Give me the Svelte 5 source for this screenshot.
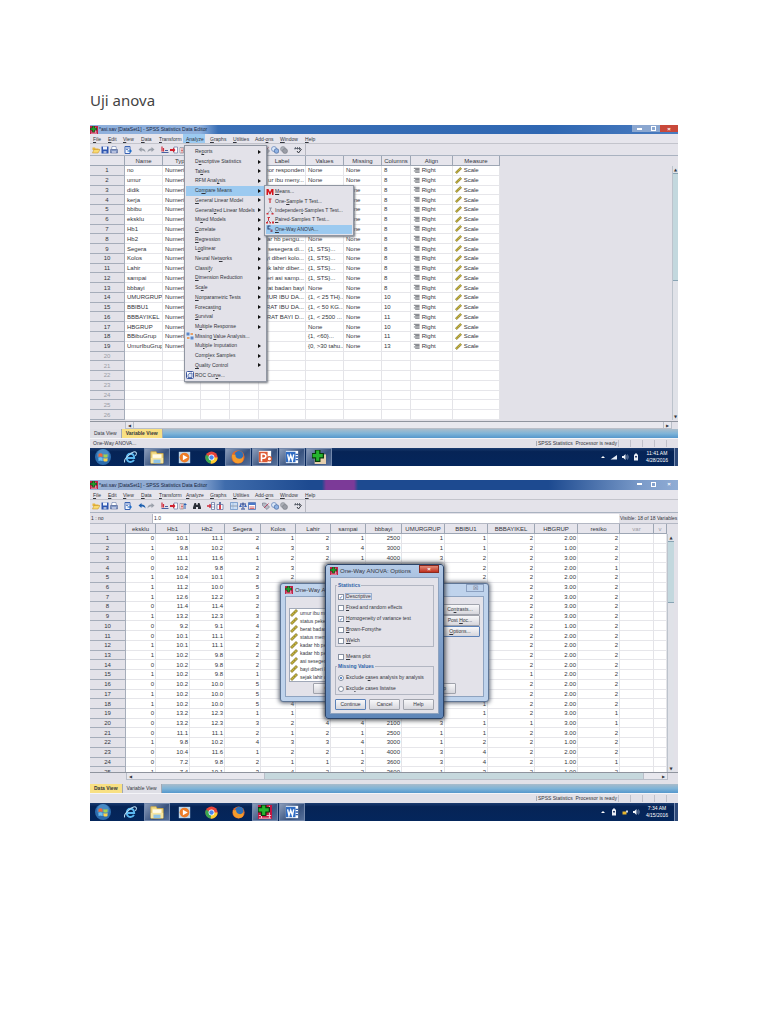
<script>
  const menus = ['&File', '&Edit', '&View', '&Data', '&Transform', '&Analyze', '&Graphs', '&Utilities', 'Add-&ons', '&Window', '&Help'];

  const toolsVariable = ['open', 'save', 'print', 'gap', 'recall', 'gap', 'undoOff', 'redo', 'gap', 'gocase', 'govar', 'vars', 'gap', 'find', 'gap', 'insCase', 'insVar', 'gap', 'split', 'weight', 'select', 'gap', 'labels', 'sets', 'showAll', 'gap', 'spell'];
  const toolsData = toolsVariable.map((t) => (t === 'undoOff' ? 'undo' : t));

  const analyze = [
    ['Re&ports', true], ['D&escriptive Statistics', true], ['Ta&bles', true], ['RFM Anal&ysis', true],
    ['Co&mpare Means', true], ['&General Linear Model', true], ['Generali&zed Linear Models', true],
    ['Mi&xed Models', true], ['&Correlate', true], ['&Regression', true], ['L&oglinear', true],
    ['Neural Net&works', true], ['Classi&fy', true], ['&Dimension Reduction', true], ['Sc&ale', true],
    ['&Nonparametric Tests', true], ['Forecas&ting', true], ['&Survival', true], ['M&ultiple Response', true],
    ['Missing &Value Analysis...', false, 'mva'], ['Mul&tiple Imputation', true], ['Comp&lex Samples', true],
    ['&Quality Control', true], ['ROC Cur&ve...', false, 'roc']
  ];
  const compare = [
    ['&Means...', 'means'], ['One-&Sample T Test...', 'tone'], ['Independen&t-Samples T Test...', 'ttwo'],
    ['&Paired-Samples T Test...', 'tpair'], ['&One-Way ANOVA...', 'anova']
  ];

  const varHead = ['', 'Name', 'Type', '', '', 'Label', 'Values', 'Missing', 'Columns', 'Align', 'Measure'];
  const vars = [
    ['no', 'mor responden', 'None', 8], ['umur', 'ur ibu meny...', 'None', 8],
    ['didik', '', '', 8], ['kerja', '', '', 8],
    ['bbibu', '', '', 8], ['eksklu', '', '', 8],
    ['Hb1', '', '', 8], ['Hb2', 'dar hb pengu...', 'None', 8],
    ['Segera', 'i sesegera di...', '{1, STS}...', 8], ['Kolos', 'yi diberi kolo...', '{1, STS}...', 8],
    ['Lahir', 'jak lahir diber...', '{1, STS}...', 8], ['sampai', 'eri asi samp...', '{1, STS}...', 8],
    ['bbbayi', 'rat badan bayi', 'None', 8], ['UMURGRUP', 'MUR IBU DA...', '{1, < 25 TH}...', 10],
    ['BBIBU1', 'ERAT IBU DA...', '{1, < 50 KG...', 10], ['BBBAYIKEL', 'ERAT BAYI D...', '{1, < 2500 ...', 11],
    ['HBGRUP', '', 'None', 10], ['BBibuGrup', '', '{1, <60}...', 11], ['UmurIbuGrup', '', '{0, >30 tahu...', 13]
  ];
  const variableRows = Array.from({ length: 26 }, (_, i) => vars[i]);

  const dataHead = ['', 'eksklu', 'Hb1', 'Hb2', 'Segera', 'Kolos', 'Lahir', 'sampai', 'bbbayi', 'UMURGRUP', 'BBIBU1', 'BBBAYIKEL', 'HBGRUP', 'resiko', 'var', 'v'];
  const dataRows = `0 10.1 11.1 2 1 2 1 2500 1 1 2 2.00 2
1 9.8 10.2 4 3 3 4 3000 1 1 2 1.00 2
0 11.1 11.6 1 2 2 1 4000 3 2 2 3.00 2
0 10.2 9.8 2 3 - - - - 2 2 2.00 1
1 10.4 10.1 3 2 - - - - 2 2 2.00 2
1 11.2 10.0 5 - - - - - - 2 3.00 2
1 12.6 12.2 3 - - - - - - 2 3.00 2
0 11.4 11.4 2 - - - - - - 2 3.00 2
1 13.2 12.3 3 - - - - - - 2 3.00 2
0 9.2 9.1 4 - - - - - - 2 1.00 2
0 10.1 11.1 2 - - - - - - 2 2.00 2
1 10.1 11.1 2 - - - - - - 2 2.00 2
1 10.2 9.8 2 - - - - - - 2 2.00 2
0 10.2 9.8 2 - - - - - - 2 2.00 2
1 10.2 9.8 1 - - - - - - 1 2.00 2
0 10.2 10.0 5 - - - - - - 2 2.00 2
1 10.2 10.0 5 - - - - - - 2 2.00 2
1 10.2 10.0 5 4 - - - - 1 2 2.00 2
0 13.2 12.3 1 1 - - - - 1 2 3.00 1
0 13.2 12.3 3 2 4 4 2100 3 1 1 3.00 1
0 11.1 11.1 2 1 2 1 2500 1 1 2 3.00 2
1 9.8 10.2 4 3 3 4 3000 1 2 2 1.00 2
0 10.4 11.6 1 2 2 1 4000 3 4 2 2.00 2
0 7.2 9.8 2 1 1 2 3600 3 4 2 1.00 1
1 7.4 10.1 3 4 2 2 3600 1 3 2 1.00 2`.split('\n').map((r) => r.split(' ').map((c) => (c === '-' ? '' : c)));

  const factors = ['umur ibu me', 'status peker', 'berat badan', 'status meny', 'kadar hb pe', 'kadar hb pe', 'asi sesegera', 'bayi diberi k', 'sejak lahir di'];
  const stats = [
    ['&Descriptive', true], ['&Fixed and random effects', false], ['&Homogeneity of variance test', true],
    ['&Brown-Forsythe', false], ['&Welch', false]
  ];

  function parts(s) {
    const i = s.indexOf('&');
    return i < 0 ? [s, '', ''] : [s.slice(0, i), s[i + 1], s.slice(i + 2)];
  }
</script>

{#snippet key(s)}{@const p = parts(s)}<span>{p[0]}<u>{p[1]}</u>{p[2]}</span>{/snippet}

{#snippet icon(n)}
  <svg class="ic" viewBox="0 0 16 16" aria-hidden="true">
    {#if n === 'app'}
      <rect width="16" height="16" fill="#c22048" /><path d="M2 12h12M11 2v12M2 15h12" stroke="#f4d0da" stroke-width="1" /><path d="M5 0h4v4h4v4H9v4H5V8H1V4h4z" fill="#1fa02c" stroke="#0b3d10" />
    {:else if n === 'open'}
      <path d="M1 3h5l1 2h6v3H1z" fill="#e8b53c" /><path d="M1 14 4 7h12l-4 7z" fill="#f8da72" stroke="#c58a1e" />
    {:else if n === 'save'}
      <path d="M1 1h14v14H1z" fill="#2d55b0" /><path d="M4 1h8v6H4z" fill="#eef2fb" /><path d="M5 10h6v5H5z" fill="#a8b9de" />
    {:else if n === 'print'}
      <path d="M4 1h8l1 6H3z" fill="#fff" stroke="#5068a0" /><path d="M1 7h14v7H1z" fill="#8297c4" stroke="#41568c" /><path d="M4 11h8v2H4z" fill="#eef" />
    {:else if n === 'recall'}
      <path d="M2 1h10v14H2z" fill="#f5f8ff" stroke="#3a64b4" stroke-width="2" /><path d="M4 4h6M4 7h4" stroke="#3a64b4" stroke-width="1.5" /><path d="M7 9h5V6l4 4-4 4v-3H7z" fill="#1e6cc8" />
    {:else if n === 'undo' || n === 'undoOff'}
      <path d="M1 7l6-5v3c5 0 8 3 8 8-2-3-4-4-8-4v3z" fill={n === 'undo' ? '#1c5fae' : '#9aa0aa'} />
    {:else if n === 'redo'}
      <path d="M15 7 9 2v3C4 5 1 8 1 13c2-3 4-4 8-4v3z" fill="#9aa0aa" />
    {:else if n === 'gocase'}
      <path d="M2 1v10M5 4v7" stroke="#d03040" stroke-width="2.4" /><path d="M1 13h14M8 9h6" stroke="#4a62a0" stroke-width="2.4" />
    {:else if n === 'govar'}
      <path d="M8 2h7v12H8z" fill="#fff" stroke="#6b7aa5" stroke-width="1.4" /><path d="M0 6h6V3l5 5-5 5v-3H0z" fill="#d2202e" />
    {:else if n === 'vars'}
      <path d="M2 3h7v11H2z" fill="#fff" stroke="#667" /><path d="M4 6h4M4 9h4M4 12h4" stroke="#c33" stroke-width="1.4" /><path d="M12 2v12M10 5h5" stroke="#2b61b5" stroke-width="2" />
    {:else if n === 'find'}
      <path d="M3 2h3l1 4h2l1-4h3l3 9v3H10v-4H6v4H0v-3z" fill="#2c3038" />
    {:else if n === 'insCase'}
      <path d="M9 1h6v14H9z" fill="#fff" stroke="#55699c" stroke-width="1.4" /><path d="M9 5h6M9 10h6" stroke="#55699c" /><path d="M0 8h8M6 4v8" stroke="#cf2f3c" stroke-width="2.6" />
    {:else if n === 'insVar'}
      <path d="M2 5h12v10H2z" fill="#fff" stroke="#55699c" stroke-width="1.4" /><path d="M6 5h4v10H6z" fill="#d64450" /><path d="M8 0v5" stroke="#33518f" stroke-width="3" />
    {:else if n === 'split'}
      <path d="M1 1h14v14H1z" fill="#e8f1fc" stroke="#5a86c0" stroke-width="1.4" /><path d="M1 8h14" stroke="#7a8aa0" stroke-width="2" /><path d="M1 4h14M1 12h14M6 1v14" stroke="#7aa5d8" />
    {:else if n === 'weight'}
      <path d="M8 1v12M2 4h12M4 14h8" stroke="#26438e" stroke-width="2" /><path d="M0 10 3 4l3 6zM10 10l3-6 3 6z" fill="#3c65bb" />
    {:else if n === 'select'}
      <path d="M1 1h14v14H1z" fill="#fff" stroke="#4b6cb0" stroke-width="1.6" /><path d="M1 2h14v4H1z" fill="#4b78c8" /><path d="M3 10h10M3 13h10" stroke="#c84850" stroke-width="1.6" />
    {:else if n === 'labels'}
      <path d="M1 2h6l8 8-5 5-9-8z" fill="#b7bac4" stroke="#596074" /><path d="M4 12l9-9" stroke="#b83a58" stroke-width="1.8" />
    {:else if n === 'sets'}
      <circle cx="6" cy="6" r="5" fill="#dbe8f8" stroke="#5f7fb8" stroke-width="1.4" /><circle cx="11" cy="10" r="4.6" fill="#8fb2e4" stroke="#47689f" stroke-width="1.4" />
    {:else if n === 'showAll'}
      <circle cx="6" cy="6" r="5" fill="#adb0b8" stroke="#80848f" /><circle cx="10" cy="10" r="5" fill="#9a9da6" stroke="#73767f" />
    {:else if n === 'spell'}
      <path d="M1 5h13M3 2l-1 5M7 2v5M11 2v6" stroke="#555b66" stroke-width="1.7" fill="none" /><path d="M6 10l3 4 6-8" stroke="#33373f" stroke-width="2" fill="none" />
    {:else if n === 'ruler'}
      <path d="M1 12 12 1l3 3L4 15z" fill="#c9b53a" stroke="#6f6418" stroke-width="1.4" /><path d="M5 9l2 2M8 6l2 2" stroke="#6f6418" />
    {:else if n === 'align'}
      <path d="M2 3h13M5 6h10M2 9h13M5 12h10" stroke="#50545c" stroke-width="1.8" />
    {:else if n === 'mva'}
      <rect width="16" height="16" fill="#dfe8f6" /><path d="M1 1h6v6H1zM9 9h6v6H9z" fill="#5d86c6" /><path d="M9 2h5v4H9zM2 10h5v4H2z" fill="#e8a068" />
    {:else if n === 'roc'}
      <rect x="1" y="1" width="14" height="14" rx="2" fill="#fff" stroke="#3b579e" stroke-width="2" /><path d="M4 13V8q0-4 8-4v9z" fill="#d9e2f4" stroke="#3b579e" stroke-width="1.5" />
    {:else if n === 'means'}
      <path d="M1 14V2h4l3 6 3-6h4v12h-3V7l-3 6H7L4 7v7z" fill="#d3141c" />
    {:else if n === 'tone'}
      <path d="M5 4h6M8 4v8" stroke="#cf3038" stroke-width="2.4" />
    {:else if n === 'ttwo'}
      <path d="M6 2h6M9 2v5M8 7l-5 6M9 7l5 6" stroke="#7e8290" stroke-width="1.5" /><path d="M1 12h4v3H1zM11 12h4v3h-4z" fill="#cf3038" />
    {:else if n === 'tpair'}
      <path d="M5 2v7M3 3h5" stroke="#cf3038" stroke-width="2" /><path d="M1 13l4-4 4 4" stroke="#80485a" fill="none" stroke-width="1.6" /><path d="M0 12h4v3H0zM7 12h3v3H7zM12 11h4v4h-4z" fill="#cf3038" />
    {:else if n === 'anova'}
      <path d="M3 2h6M4 2v6h5" stroke="#2d4270" stroke-width="2.2" fill="none" /><path d="M9 9h4v5H9z" fill="#8a5870" />
    {:else if n === 'start'}
      <circle cx="8" cy="8" r="8" fill="#2c6cae" /><circle cx="8" cy="6" r="6" fill="#5b9fd2" opacity=".6" /><path d="M3.500 5q2-1.500 4 0v3q-2-1-4 0z" fill="#f0683a" /><path d="M8.500 5q2 1.200 4 0v3q-2 1.200-4 0z" fill="#a6d14c" /><path d="M3.500 9q2-1.300 4 0v3q-2-1-4 0z" fill="#6cc0f2" /><path d="M8.500 9q2 1.200 4 0v3q-2 1.200-4 0z" fill="#fbd24a" />
    {:else if n === 'ie'}
      <path d="M3.500 8.500h9q0-5-4.500-5t-4.500 5 4.500 5q3 0 4.200-2.600" fill="none" stroke="#5bb8f0" stroke-width="2.400" /><path d="M1 14Q-1 11 6 5t9-3q1 1-1 4" fill="none" stroke="#b9dcf2" stroke-width="1.300" />
    {:else if n === 'folder'}
      <path d="M1 2h6l1 2h7v11H1z" fill="#f3dc86" stroke="#c9a84a" /><path d="M3 5h10v6H3z" fill="#fffbe8" /><path d="M1 9h14v6H1z" fill="#f7e6a2" /><path d="M4 11h8v4H4z" fill="#8fc4e6" />
    {:else if n === 'wmp'}
      <rect x="1" y="1" width="14" height="14" fill="#bcd6ec" /><circle cx="8" cy="8" r="6" fill="#ee7d28" /><path d="M6 4.500v7L12 8z" fill="#fff" />
    {:else if n === 'chrome'}
      <circle cx="8" cy="8" r="7.500" fill="#e6453a" /><path d="M8 8 1.300 4.500A7.500 7.500 0 0 0 7 15.500z" fill="#39a852" /><path d="M8 8h7.500A7.500 7.500 0 0 1 7 15.500z" fill="#fbce30" /><circle cx="8" cy="8" r="3.600" fill="#fff" /><circle cx="8" cy="8" r="2.700" fill="#4886ee" />
    {:else if n === 'firefox'}
      <circle cx="8" cy="8" r="7.500" fill="#e2692a" /><circle cx="9" cy="6" r="5" fill="#2f6fb6" /><path d="M1 5q2 1 4 0 0 5 5 5 3 0 4-3 1 8-6 8T1 5z" fill="#f59c2c" />
    {:else if n === 'ppt'}
      <path d="M1 1h14v14H1z" fill="#fff" /><circle cx="13" cy="10" r="2.500" fill="none" stroke="#d2562e" stroke-width="1.400" /><path d="M1 2h10v12H1z" fill="#dc5a34" /><path d="M4 13V4.500h2.500q2.500 .3 2.500 2.400T6.500 9.500H4" fill="none" stroke="#fff" stroke-width="1.800" />
    {:else if n === 'word'}
      <path d="M1 1h14v14H1z" fill="#fff" /><path d="M12 5h3M12 8h3M12 11h3" stroke="#2f5fae" stroke-width="1.500" /><path d="M1 2h11v12H1z" fill="#2f6cc4" /><path d="M3 5l1.500 7L6.500 6l2 6L10 5" fill="none" stroke="#fff" stroke-width="1.600" />
    {:else if n === 'spss'}
      <path d="M3 5h13v11H3z" fill="#e6cfae" /><path d="M4 0h5v4h4v5H9v4H4V9H0V4h4z" fill="#25b52e" stroke="#083c0c" stroke-width="1.400" />
    {:else if n === 'spssRed'}
      <path d="M0 0h16v16H0z" fill="#c41440" /><path d="M1 12h14M4 1v14M13 1v14M1 15h14" stroke="#f7d8e0" /><path d="M4 0h5v3h4v5H9v4H4V8H0V3h4z" fill="#25b52e" stroke="#083c0c" stroke-width="1.400" />
    {:else if n === 'caret'}
      <path d="M4 10l4-4 4 4z" fill="#fff" />
    {:else if n === 'signal'}
      <path d="M1 13l13-9v9z" fill="#e6ecf6" />
    {:else if n === 'speaker'}
      <path d="M2 6h3l4-4v12l-4-4H2z" fill="#f2f5fa" /><path d="M11 5q2 3 0 6M13 3q3 5 0 10" stroke="#cdd7e8" fill="none" />
    {:else if n === 'battery'}
      <path d="M6 1h4v2h2v12H4V3h2z" fill="#e9edf5" /><path d="M6 6h4v3H6z" fill="#34466e" />
    {:else if n === 'net'}
      <path d="M3 7h8v6H3z" fill="#e6b52c" /><path d="M10 5h4v4h-4z" fill="#cfd6e2" />
    {/if}
  </svg>
{/snippet}

{#snippet chrome(tools, active)}
  <header class="title">
    {@render icon('app')}<span>*asi.sav [DataSet1] - SPSS Statistics Data Editor</span>
    <div class="sys">
      <button aria-label="Minimize"><i class="min"></i></button>
      <button aria-label="Restore"><i class="max"></i></button>
      <button aria-label="Close" class="close">×</button>
    </div>
  </header>
  <nav class="menubar">
    {#each menus as m}<button class:on={m === active}>{@render key(m)}</button>{/each}
  </nav>
  <div class="toolbar">
    {#each tools as t}
      {#if t === 'gap'}<i class="gap"></i>{:else}<button aria-label={t}>{@render icon(t)}</button>{/if}
    {/each}
    <i class="end"></i>
  </div>
{/snippet}

{#snippet foot(view, status, apps, openApps, tray, time, date)}
  <div class="tabs">
    {#each ['Data View', 'Variable View'] as t}<button class:sel={t === view}>{t}</button>{/each}
  </div>
  <div class="status">
    <span class="msg">{status}</span><span class="proc">SPSS Statistics &nbsp;Processor is ready</span>
    <i></i><i></i><i></i><i></i><i></i>
  </div>
  <footer class="taskbar">
    {#each apps as a}<button aria-label={a} class:open={openApps.includes(a)}>{@render icon(a)}</button>{/each}
    <div class="tray">
      {#each tray as t}{@render icon(t)}{/each}
      <time>{time}<br />{date}</time><i class="peek"></i>
    </div>
  </footer>
{/snippet}

<main>
  <h1>Uji anova</h1>

  <section class="screen one">
    {@render chrome(toolsVariable, '&Analyze')}
    <div class="sheet">
      <table class="vars">
        <thead><tr>{#each varHead as h}<th>{h}</th>{/each}</tr></thead>
        <tbody>
          {#each variableRows as r, i}
            <tr>
              <th class:dim={!r}>{i + 1}</th>
              {#if r}
                <td>{r[0]}</td><td>Numeri</td><td></td><td></td><td>{r[1]}</td><td>{r[2]}</td><td>None</td><td>{r[3]}</td>
                <td>{@render icon('align')} Right</td><td>{@render icon('ruler')} Scale</td>
              {:else}
                {#each Array(10) as _}<td></td>{/each}
              {/if}
            </tr>
          {/each}
        </tbody>
      </table>
      <div class="vscroll"><b>▲</b><i></i><b>▼</b></div>
    </div>
    <div class="hscroll"><b>◀</b><i></i><b>▶</b></div>
    {@render foot('Variable View', 'One-Way ANOVA...', ['start', 'ie', 'folder', 'wmp', 'chrome', 'firefox', 'ppt', 'word', 'spss'], ['folder', 'firefox', 'ppt', 'word', 'spss'], ['caret', 'signal', 'speaker', 'battery'], '11:41 AM', '4/28/2016')}

    <div class="popup analyze">
      {#each analyze as [label, sub, ic]}
        <button class:on={label === 'Co&mpare Means'}>
          <em>{#if ic}{@render icon(ic)}{/if}</em>{@render key(label)}{#if sub}<s></s>{/if}
        </button>
      {/each}
    </div>
    <div class="popup compare">
      {#each compare as [label, ic], i}
        <button class:on={i === 4}><em>{@render icon(ic)}</em>{@render key(label)}</button>
      {/each}
    </div>
  </section>

  <section class="screen two">
    {@render chrome(toolsData, '')}
    <div class="cellbar"><span>1 : no</span><input aria-label="Cell value" value="1.0" /><span>Visible: 18 of 18 Variables</span></div>
    <div class="sheet">
      <table class="data">
        <thead><tr>{#each dataHead as h, i}<th class:dim={i > 13}>{h}</th>{/each}</tr></thead>
        <tbody>
          {#each dataRows as r, i}
            <tr><th>{i + 1}</th>{#each r as c}<td>{c}</td>{/each}<td></td><td></td></tr>
          {/each}
        </tbody>
      </table>
      <div class="vscroll"><b>▲</b><i></i><b>▼</b></div>
    </div>
    <div class="hscroll"><b>◀</b><i></i><b>▶</b></div>
    {@render foot('Data View', '', ['start', 'ie', 'folder', 'wmp', 'chrome', 'firefox', 'spssRed', 'word'], ['folder', 'spssRed', 'word'], ['caret', 'battery', 'net', 'speaker'], '7:34 AM', '4/15/2016')}

    <div class="dialog anova">
      <header>{@render icon('app')}<span>One-Way AN</span><button aria-label="Close ANOVA">☒</button></header>
      <div class="pane">
        <div class="cols">
          <ul>{#each factors as f}<li>{@render icon('ruler')}{f}</li>{/each}</ul>
          <div class="side">
            <button>{@render key('Co&ntrasts...')}</button><button>{@render key('Post &Hoc...')}</button><button class="focus">{@render key('&Options...')}</button>
          </div>
        </div>
        <div class="acts"><button>OK</button><button>Help</button></div>
      </div>
    </div>

    <div class="dialog options">
      <header>{@render icon('app')}<span>One-Way ANOVA: Options</span><button class="red" aria-label="Close options">×</button></header>
      <div class="pane">
        <fieldset>
          <legend>Statistics</legend>
          {#each stats as [l, c], i}<label class:focused={i === 0}><input type="checkbox" checked={c} />{@render key(l)}</label>{/each}
        </fieldset>
        <label class="plot"><input type="checkbox" />{@render key('&Means plot')}</label>
        <fieldset>
          <legend>Missing Values</legend>
          <label><input type="radio" name="missing" checked />{@render key('Exclude c&ases analysis by analysis')}</label>
          <label><input type="radio" name="missing" />{@render key('Exc&lude cases listwise')}</label>
        </fieldset>
        <div class="acts"><button class="focus">Continue</button><button>Cancel</button><button>Help</button></div>
      </div>
    </div>
  </section>
</main>

<style>
  :global(body) { margin: 0; background: #fff; }
  main { padding: 90px 90px 40px; font: 5px/1 "Liberation Sans", Arial, sans-serif; color: #33353c; }
  main * { box-sizing: border-box; }
  h1 { margin: 0 0 15px; font: 400 15px/20px "Noto Sans", "Open Sans", sans-serif; color: #444; }
  button { margin: 0; padding: 0; border: 0; background: none; font: inherit; color: inherit; white-space: nowrap; }
  .ic { width: 8px; height: 8px; flex: none; display: block; }

  .screen { position: relative; display: flex; flex-direction: column; aspect-ratio: 588 / 341; min-height: 341px; background: #e2e1e8; overflow: hidden; }
  .screen + .screen { margin-top: 14px; }

  .title { flex: none; display: flex; align-items: center; gap: 1px; height: 9px; background: linear-gradient(90deg, #8fb0dc 0, #8fb0dc 110px, #3a6fb6 128px, #2f67b2 78%, #4a7cc0 100%); color: #16243c; white-space: nowrap; }
  .two .title { height: 10px; background: linear-gradient(90deg, transparent 232px, #7c3a98 236px, #7c3a98 264px, transparent 268px), linear-gradient(90deg, #9ab2d6 0, #86a4d0 110px, #3f6cac 135px, #1d4a90 220px, #1d4a90 78%, #7c9cca 94%, #90acd4 100%); }
  .sys { margin-left: auto; align-self: stretch; display: flex; padding-bottom: 2px; }
  .sys button { width: 14px; display: grid; place-items: center; background: #8ba7d0; color: #fff; font-size: 6px; font-weight: 700; line-height: 6px; }
  .sys .close { width: 18px; background: #c9483a; }
  .two .sys button { background: none; }
  .min { width: 5px; height: 2px; background: #fff; }
  .max { width: 5px; height: 5px; border: 1px solid #fff; }

  .menubar { flex: none; height: 10px; display: grid; grid-template-columns: 15px 15px 18px 18px 27px 24px 23px 22px 25px 25px 16px; border-bottom: 1px solid #c3c4cc; background: #e6e5ec; }
  .menubar button { text-align: left; padding: 1px 0 0 3px; line-height: 8px; }
  .menubar .on { background: #9ccaf0; margin: 0 2px 0 0; }

  .toolbar { flex: none; height: 12px; display: flex; align-items: center; gap: 1px; padding-left: 2px; border-bottom: 1px solid #a9b2c0; background: #e4e3ea; }
  .two .toolbar { height: 13px; }
  .toolbar .gap { width: 4px; }
  .toolbar .end { width: 1px; height: 12px; margin-left: 2px; background: #b8b9c2; }

  .cellbar { flex: none; height: 11px; display: grid; grid-template-columns: 62px 1fr 59px; align-items: center; background: #e2e1e8; border-bottom: 1px solid #b4b8c4; }
  .cellbar span { padding-left: 1px; white-space: nowrap; }
  .cellbar input { min-width: 0; height: 9px; border: 0; border-left: 1px solid #b4b8c4; padding: 0 1px; font: inherit; background: #fff; color: inherit; }

  .sheet { flex: 1; min-height: 0; display: flex; overflow: hidden; border-bottom: 1px solid #8f949e; }
  .one .sheet { padding-bottom: 1px; }
  table { flex: 1; min-width: 0; display: flex; flex-direction: column; font-size: 6px; overflow: hidden; }
  thead { display: block; flex: none; }
  thead tr { height: 10px; }
  tbody { flex: 1; min-height: 0; display: flex; flex-direction: column; }
  .data tbody { margin-bottom: -5px; }
  tbody tr { flex: 1 1 0; min-height: 0; }
  tr { display: grid; grid-template-rows: 100%; }
  .vars tr { grid-template-columns: 35px 38px 38px 29px 29px 47px 38px 38px 29px 42px 47px; }
  .data tr { grid-template-columns: 36px 30px 34px 35px 36px 35px 35px 35px 36px 43px 43px 47px 43px 42px 34px 1fr; }
  th, td { min-width: 0; padding: 0 2px; display: flex; align-items: center; overflow: hidden; white-space: pre; border-right: 1px solid #e4e4e8; border-bottom: 1px solid #e6e6ea; background: #fff; font-weight: 400; }
  th { justify-content: center; background: #e3e2e9; border-color: #a6adba; }
  thead th { background: #e6e5ec; border-color: #9da6b4; }
  td .ic { width: 7px; height: 7px; }
  .vars td:nth-child(2) { padding-right: 0; }
  .vars td:nth-child(6) { justify-content: flex-end; padding: 0 1px 0 0; }
  .data td { justify-content: flex-end; padding-right: 1px; }
  .dim { color: #9a9ca4; }

  .vscroll { flex: none; width: 6px; display: flex; flex-direction: column; margin-top: 10px; background: #e0e2e8; border-left: 1px solid #bcc3cc; }
  .two .vscroll { width: 7px; margin-right: 4px; }
  .vscroll b, .hscroll b { font: 4px/7px "DejaVu Sans", sans-serif; text-align: center; }
  .vscroll i { height: 108px; margin-bottom: auto; background: #c3d8de; border: solid #88a4b4; border-width: 1px 0; }
  .two .vscroll i { height: 62px; }
  .hscroll { flex: none; height: 7px; display: flex; margin: 0 6px 0 35px; border: solid #b9bec8; border-width: 0 1px 1px; background: #e8e8ee; }
  .hscroll b { width: 7px; }
  .hscroll i { flex: 1; border: solid #b9bec8; border-width: 0 1px; }
  .two .hscroll { margin: 0 10px 4px 36px; }
  .two .hscroll i { margin: 0 16px 0 130px; background: #c6d8dd; }

  .tabs { flex: none; height: 9px; display: flex; background: linear-gradient(#a9bccb, #7fb4d8 50%, #5597cc); }
  .tabs button { padding: 0 4px; background: #dfdfe6; border-right: 1px solid #a2a8b4; }
  .tabs .sel { background: #f8e083; font-weight: 700; }
  .status { flex: none; height: 10px; display: flex; align-items: center; border-top: 1px solid #f4f4f8; background: #e2e1e8; }
  .status .msg { flex: 1; padding-left: 3px; }
  .status .proc { width: 82px; padding-left: 1px; white-space: nowrap; border-left: 1px solid #a8acb6; }
  .status i { width: 12px; height: 7px; border-left: 1px solid #c0c1ca; }

  .taskbar { flex: none; height: 18px; display: flex; background: linear-gradient(#1b3c70, #062456 20%, #04265c); }
  .taskbar > button { width: 26px; margin-right: 1px; display: grid; place-items: center; }
  .taskbar > button .ic { width: 13px; height: 13px; }
  .taskbar > button:first-child .ic { width: 16px; height: 16px; }
  .taskbar > button:nth-child(3) .ic, .taskbar .open .ic { width: 14px; height: 14px; }
  .taskbar .open { background: linear-gradient(135deg, #8a9cba, #38527e 60%, #56709a); border: 1px solid #7388ac; }
  .tray { margin-left: auto; display: flex; align-items: center; gap: 3px; color: #fff; }
  time { width: 28px; text-align: center; line-height: 7px; }
  .peek { width: 4px; align-self: stretch; border-left: 1px solid #7b90b4; background: #2c4878; }

  .popup { position: absolute; display: flex; flex-direction: column; padding: 1px; background: #e3e2e9; border: 1px solid #9096a2; box-shadow: 1px 1px 2px #6c7078; }
  .popup button { flex: 1 1 0; min-height: 0; display: flex; align-items: center; }
  .popup .on { background: #9ccaf0; }
  .popup em { width: 9px; flex: none; }
  .popup s { margin: 0 4px 0 auto; border: solid transparent; border-width: 2px 0 2px 3px; border-left-color: #111; }
  .analyze { left: 94px; top: 20px; width: 83px; height: 237px; }
  .compare { left: 174px; top: 60px; width: 90px; height: 51px; }

  .dialog { position: absolute; display: flex; flex-direction: column; padding: 0 4px 4px; border: 1px solid #5f7696; border-radius: 3px; background: #bfd3ec; box-shadow: 0 0 4px 1px #5a6270; }
  .dialog header { flex: none; height: 12px; display: flex; align-items: center; gap: 2px; font-size: 6px; white-space: nowrap; }
  .dialog header button { margin-left: auto; align-self: flex-start; width: 18px; height: 8px; border: 1px solid #8ba0c0; line-height: 6px; color: #667; }
  .dialog header .red { width: 20px; background: linear-gradient(#e08a78, #c0301e); color: #fff; border-color: #8a2a20; font-weight: 700; }
  .pane { flex: 1; min-height: 0; display: flex; flex-direction: column; border: 1px solid #8ea3c0; background: #e3e2e9; }
  .pane button { height: 11px; border: 1px solid #a0a3ac; border-radius: 1px; background: linear-gradient(#f8f8fa, #d6d6dc); }
  .pane .focus { border-color: #5c82b8; }
  .anova { left: 190px; top: 103px; width: 209px; height: 119px; }
  .anova .pane { padding: 7px 3px 2px; justify-content: space-between; }
  .cols { display: flex; justify-content: space-between; }
  ul { margin: 4px 0 0; padding: 0; width: 80px; list-style: none; background: #fff; border: 1px solid #a0a8b8; }
  li { height: 8px; display: flex; align-items: center; gap: 2px; white-space: nowrap; }
  .side { display: flex; flex-direction: column; width: 40px; }
  .acts { display: flex; justify-content: space-between; gap: 3px; }
  .options .acts button { flex: 1; }
  .anova .acts { padding: 0 24px; }
  .anova .acts button { width: 30px; }

  .options { left: 235px; top: 84px; width: 119px; height: 155px; background: linear-gradient(#b4cae6, #7f9fca 50%, #5f86b8); border-color: #2c4468; box-shadow: 0 0 5px 1px #30343c; }
  .options .pane { padding: 7px 4px 3px; justify-content: space-between; }
  fieldset { position: relative; margin: 0; padding: 5px 2px 0; border: 1px solid #b2b6c2; min-width: 0; }
  legend { position: absolute; top: -3px; left: 1px; padding: 0 1px; background: #e3e2e9; font-weight: 700; color: #2c62a8; }
  label { display: flex; align-items: center; gap: 2px; height: 11px; white-space: nowrap; }
  .focused span { outline: 1px solid #9ab0d0; }
  .plot { padding-left: 3px; }
  label input { appearance: none; flex: none; width: 6px; height: 6px; margin: 0; border: 1px solid #8791a2; background: #fff; display: grid; place-items: center; overflow: hidden; }
  input[type="checkbox"]:checked::after { content: "✓"; font: 700 5px/4px "DejaVu Sans", sans-serif; color: #2c549c; }
  input[type="radio"] { border-radius: 50%; }
  input[type="radio"]:checked::after { content: ""; width: 2px; height: 2px; border-radius: 50%; background: #2c66b8; }
</style>
